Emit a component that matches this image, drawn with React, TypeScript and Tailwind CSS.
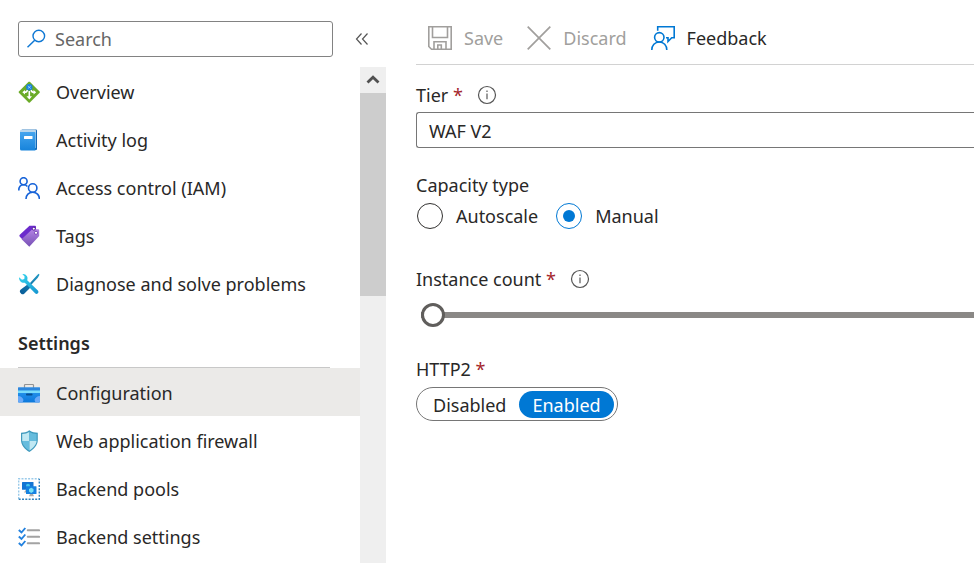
import { useState, type ReactNode } from "react";

function Icon({ children, size = "size-[22px]", box = "0 0 22 22" }: { children: ReactNode; size?: string; box?: string }) {
  return (
    <svg aria-hidden="true" viewBox={box} fill="none" className={`${size} shrink-0`}>
      {children}
    </svg>
  );
}

const GatewayIcon = () => (
  <Icon>
    <path d="M10.600.8h1.200L21.600 10.500a.9.9 0 0 1 0 1.200L11.900 21.400a1 1 0 0 1-1.300 0L.9 11.700a.9.9 0 0 1 0-1.200Z" fill="#6bab28" />
    <path d="M11.300 10v6" stroke="#fff" strokeWidth="1.600" />
    <path d="m8.500 15.300 2.800 3.200 2.700-3.200Z" fill="#fff" />
    <path d="M9.500 9Q9 11.300 6.500 11.300M13 9Q13.500 11.300 16 11.300" stroke="#fff" strokeWidth="1.400" />
    <path d="M4.300 11.300 7 9v4.600ZM18.200 11.300 15.500 9v4.600Z" fill="#fff" />
    <circle cx="11.300" cy="6.300" r="3.200" fill="#1b83dd" />
    <path d="m9.800 5 3 2.600M12.800 5l-3 2.600" stroke="#b5e1ff" strokeWidth=".7" />
  </Icon>
);

const LogIcon = () => (
  <Icon>
    <defs>
      <linearGradient id="book" x1="0" y1="0" x2="0" y2="1">
        <stop stopColor="#45a5ee" />
        <stop offset="1" stopColor="#1683db" />
      </linearGradient>
    </defs>
    <path d="M4 .5h14q1 0 1 1v18.500q0 1-1 1H4Z" fill="#1267b4" />
    <path d="M3.500.5H17q1 0 1 1V19H2V2Q2 .5 3.500.5Z" fill="#b9d6ec" />
    <path d="M2 3h14.500q1 0 1 1v17q0 .6-.8.600H3.500Q2 21.600 2 20Z" fill="url(#book)" />
    <rect x="6" y="7" width="8.500" height="3" rx=".5" fill="#fff" />
  </Icon>
);

const PeopleIcon = () => (
  <Icon>
    <g stroke="#1763d8" strokeWidth="1.600">
      <circle cx="5.600" cy="4.200" r="3.500" />
      <path d="M.8 13.500C.8 10 2.800 7.800 5.600 7.800c1.600 0 2.900.6 3.800 1.700" />
      <circle cx="14.700" cy="11" r="4.200" />
      <path d="M8 22c0-3.900 2.800-6.700 6.700-6.700s6.700 2.800 6.700 6.700" />
    </g>
  </Icon>
);

const TagsIcon = () => (
  <Icon>
    <defs>
      <linearGradient id="tag" x1="0" y1="0" x2="0" y2="1">
        <stop stopColor="#b484e5" />
        <stop offset="1" stopColor="#7650b4" />
      </linearGradient>
    </defs>
    <path d="M11.500.7 17 .8q1 0 1 1v4.500L4.500 14.500l-2.700-2.700q-1-1 0-2Z" fill="#6b2bcc" />
    <path d="m14.500 4 5.800.2q.9 0 .9.900v6L11.300 21.800 3.600 14.300Z" fill="url(#tag)" />
    <circle cx="15.800" cy="3.700" r="1.500" fill="#fff" stroke="#562098" />
    <circle cx="18" cy="7.800" r="1.600" fill="#fff" stroke="#7b4bb8" />
  </Icon>
);

const ToolsIcon = () => (
  <Icon>
    <defs>
      <linearGradient id="driver" x1="1" y1="0" x2="0" y2="1">
        <stop stopColor="#239bc5" />
        <stop offset="1" stopColor="#075996" />
      </linearGradient>
      <linearGradient id="wrench" x1="0" y1="0" x2="1" y2="1">
        <stop stopColor="#38d6ee" />
        <stop offset="1" stopColor="#1695d0" />
      </linearGradient>
    </defs>
    <path d="m20.500.7 1 1-1.700 3-6.500 7-1.500-1.500 6.800-7.500ZM9.500 11.500l3 3-6.300 6.200q-1.500 1.100-3 0l-1.200-1.500q-.6-1.300.5-2.500Z" fill="url(#driver)" />
    <path d="M4.300 1.100Q7.300.6 8.800 3c1 1.500.8 2.700.4 4.200l10.700 10.200q1.300 1.400 0 2.800-1.400 1.300-2.800.1L6.800 9.700C3.800 10.200.8 8.300 1 4.300L4 6.800l2.300-.9.300-2.300Z" fill="url(#wrench)" />
  </Icon>
);

const ToolboxIcon = () => (
  <Icon>
    <defs>
      <linearGradient id="toolbox" x1="0" y1="0" x2="0" y2="1">
        <stop stopColor="#2f9bf0" />
        <stop offset="1" stopColor="#0b78dc" />
      </linearGradient>
    </defs>
    <path d="M6.500 6V3.300q0-.8.800-.8h7.400q.8 0 .8.800V6" stroke="#949494" strokeWidth="1.200" />
    <rect y="5.500" width="22" height="15" rx=".8" fill="url(#toolbox)" />
    <path d="M0 5.500h22v3H0Z" fill="#2e86dc" />
    <path d="M0 8.500h22V11H0Z" fill="#79dcfb" />
    <rect x="8" y="11.500" width="6.500" height="2" rx=".7" fill="#064f92" />
    <path d="M0 14c3 0 5 2 5.500 4l-1 2.500H1L0 19.500ZM22 14c-3 0-5 2-5.500 4l1 2.500H21l1-1Z" fill="#68a9f8" />
  </Icon>
);

const ShieldIcon = () => (
  <Icon>
    <path d="M11.300.2C14 2.300 17 2.600 19.800 2.700V10c0 5.500-4.300 9.200-8.500 12C7 19.200 3 15.500 3 10V2.700C6 2.600 8.800 2.300 11.300.2Z" fill="#3f9abd" />
    <path d="M11.300 2v9H4.200V4C7 3.900 9.300 3.300 11.300 2ZM11.300 11h7.300c-.4 4.200-4 7.500-7.300 9.600Z" fill="#c0e8f3" />
    <path d="M11.300 2c2.200 1.300 4.700 1.900 7.300 2v7h-7.300ZM4.200 11h7.100v9.600C8 18.400 4.500 15.200 4.200 11Z" fill="#66bcdd" />
  </Icon>
);

const PoolsIcon = () => (
  <Icon>
    <path d="M.7 21V.7H21" stroke="#9bcbea" strokeWidth="1.400" strokeDasharray="2 1.300" />
    <path d="M.7 21.300h20.600V.7" stroke="#3282bc" strokeWidth="1.400" strokeDasharray="2 1.300" />
    <rect x="4" y="4" width="11.500" height="7.800" rx=".5" fill="#1375d3" />
    <path d="M8 11.500h3v3H6Z" fill="#ababab" />
    <circle cx="10" cy="7.700" r="2" fill="#45c5ed" />
    <rect x="8" y="8.200" width="10.500" height="7.800" rx=".5" fill="#1682e1" />
    <path d="m13.200 9.700 2.300 1.300v2.600l-2.300 1.300-2.200-1.300V11Z" fill="#75e1f7" />
    <path d="M12 16h3l1 2.300h-5Z" fill="#ababab" />
  </Icon>
);

const ChecklistIcon = () => (
  <Icon>
    <path d="M9.700 4.300h11.500M9.700 10.800h11.500M9.700 17.300h11.500" stroke="#a3a3a3" strokeWidth="1.900" strokeLinecap="round" />
    <path d="m.8 4 2.700 2.500L7.300 2M.8 10.500 3.500 13l3.800-4.500M.8 17l2.700 2.500L7.300 15" stroke="#2382df" strokeWidth="1.900" />
  </Icon>
);

const InfoIcon = () => (
  <Icon size="size-5" box="0 0 20 20">
    <circle cx="10" cy="10" r="8.500" stroke="#555" strokeWidth="1.200" />
    <path d="M10 8.500v5.800M10 5.500v1.600" stroke="#666" strokeWidth="1.300" />
  </Icon>
);

const general = [
  { label: "Overview", icon: <GatewayIcon /> },
  { label: "Activity log", icon: <LogIcon /> },
  { label: "Access control (IAM)", icon: <PeopleIcon /> },
  { label: "Tags", icon: <TagsIcon /> },
  { label: "Diagnose and solve problems", icon: <ToolsIcon /> },
];

const settings = [
  { label: "Configuration", icon: <ToolboxIcon />, current: true },
  { label: "Web application firewall", icon: <ShieldIcon /> },
  { label: "Backend pools", icon: <PoolsIcon /> },
  { label: "Backend settings", icon: <ChecklistIcon /> },
];

function NavItem({ label, icon, current = false }: { label: string; icon: ReactNode; current?: boolean }) {
  return (
    <li>
      <a
        href="#"
        aria-current={current ? "page" : undefined}
        className={`flex h-12 items-center gap-4 pt-0.5 pl-[18px] whitespace-nowrap ${current ? "bg-[#ebeae8]" : ""}`}
      >
        {icon}
        {label}
      </a>
    </li>
  );
}

function Sidebar() {
  return (
    <aside className="flex w-[386px] shrink-0 flex-col">
      <div className="flex items-center gap-5 pt-[21px] pb-2.5 pl-[18px]">
        <label className="flex h-9 w-[315px] items-center gap-2 rounded-[3px] border border-[#828282] px-2">
          <Icon size="size-5" box="0 0 20 20">
            <circle cx="11.800" cy="7" r="5.800" stroke="#0f78d4" strokeWidth="1.400" />
            <path d="M7.700 11.200.5 18.300" stroke="#0f78d4" strokeWidth="1.500" />
          </Icon>
          <input type="search" aria-label="Search" placeholder="Search" className="min-w-0 flex-1 outline-none placeholder:text-[#666]" />
        </label>
        <button type="button" aria-label="Collapse menu">
          <Icon size="size-[18px]" box="0 0 18 18">
            <path d="M8.500 3.500 3.500 9l5 5.500M14.500 3.500 9.500 9l5 5.500" stroke="#555" strokeWidth="1.200" />
          </Icon>
        </button>
      </div>
      <div className="flex flex-1">
        <nav className="min-w-0 flex-1">
          <ul>
            {general.map((item) => (
              <NavItem key={item.label} {...item} />
            ))}
          </ul>
          <h2 className="mr-[30px] ml-[18px] flex h-[61px] items-end border-b border-[#c8c8c8] pb-3 font-semibold">
            Settings
          </h2>
          <ul>
            {settings.map((item) => (
              <NavItem key={item.label} {...item} />
            ))}
          </ul>
        </nav>
        <div className="w-[26px] bg-[#efefef]">
          <button type="button" aria-label="Scroll up" className="flex h-[26px] w-full items-center justify-center">
            <Icon size="size-4" box="0 0 16 16">
              <path d="m2.500 10.500 5.500-5.300 5.500 5.300" stroke="#505050" strokeWidth="2.800" />
            </Icon>
          </button>
          <div className="h-[203px] bg-[#cdcdcd]" />
        </div>
      </div>
    </aside>
  );
}

const Required = () => <span className="text-[#a4262c]">*</span>;

function InfoButton({ about }: { about: string }) {
  return (
    <button type="button" aria-label={`About ${about}`} className="ml-3.5">
      <InfoIcon />
    </button>
  );
}

function Toolbar() {
  return (
    <div className="flex h-[65px] items-center border-b border-[#d2d2d2] pt-3 pl-3 whitespace-nowrap">
      <button type="button" disabled className="flex items-center gap-3 text-[#a19f9d]">
        <Icon size="size-6" box="0 0 24 24">
          <path d="M.8.8h22.400v22.400H3.500L.8 20.500ZM4.500 1v10.500h15V1M6 23v-7.200h12V23M9.800 23v-4h3.500v4" stroke="#a19f9d" strokeWidth="1.600" />
        </Icon>
        Save
      </button>
      <button type="button" disabled className="ml-6 flex items-center gap-3 text-[#a19f9d]">
        <Icon size="size-6" box="0 0 24 24">
          <path d="m.7.7 22.600 22.600M23.300.7.7 23.300" stroke="#a19f9d" strokeWidth="1.700" />
        </Icon>
        Discard
      </button>
      <button type="button" className="ml-6 flex items-center gap-3">
        <Icon size="size-6" box="0 0 24 24">
          <g stroke="#0078d4" strokeWidth="1.600">
            <path d="M6.700 4.800V.8h16.500v11h-2.500l-3.700 3.700v-3.700h-2" />
            <circle cx="8.300" cy="11.300" r="4.700" />
            <path d="M.8 24c0-4.500 3-8 7.500-8s7.500 3.500 7.500 8" />
          </g>
        </Icon>
        Feedback
      </button>
    </div>
  );
}

function CapacityOption({ label, checked, onSelect }: { label: string; checked: boolean; onSelect: () => void }) {
  return (
    <label className="flex items-center gap-[13px]">
      <input
        type="radio"
        name="capacity"
        checked={checked}
        onChange={onSelect}
        className="grid size-[26px] appearance-none place-items-center rounded-full border border-[#323130] checked:border-[#0078d4] checked:before:size-3 checked:before:rounded-full checked:before:bg-[#0078d4]"
      />
      {label}
    </label>
  );
}

function ConfigurationForm() {
  const [capacity, setCapacity] = useState("Manual");
  const [http2, setHttp2] = useState("Enabled");
  const [count, setCount] = useState(1);

  return (
    <form className="whitespace-nowrap">
      <div className="flex h-[47px] items-center pt-3">
        <label htmlFor="tier">
          Tier <Required />
        </label>
        <InfoButton about="tier" />
      </div>
      <select id="tier" className="block h-9 w-full appearance-none rounded-l-[3px] border border-r-0 border-[#767676] px-3 pt-0.5">
        <option>WAF V2</option>
        <option>Standard V2</option>
      </select>

      <fieldset className="mt-[23px]">
        <legend className="leading-7">Capacity type</legend>
        <div className="flex gap-[18px] pt-1 pl-px">
          {["Autoscale", "Manual"].map((name) => (
            <CapacityOption key={name} label={name} checked={capacity === name} onSelect={() => setCapacity(name)} />
          ))}
        </div>
      </fieldset>

      <div className="flex h-[74px] items-end pb-3">
        <div className="flex items-center">
          <label htmlFor="count">
            Instance count <Required />
          </label>
          <InfoButton about="instance count" />
        </div>
      </div>
      <input
        id="count"
        type="range"
        min={1}
        max={125}
        value={count}
        onChange={(e) => setCount(Number(e.target.value))}
        className="block h-6 w-full appearance-none bg-transparent pl-[5px] [&::-webkit-slider-runnable-track]:h-1.5 [&::-webkit-slider-runnable-track]:bg-[#8a8886] [&::-webkit-slider-thumb]:-mt-[9px] [&::-webkit-slider-thumb]:size-6 [&::-webkit-slider-thumb]:appearance-none [&::-webkit-slider-thumb]:rounded-full [&::-webkit-slider-thumb]:border-3 [&::-webkit-slider-thumb]:border-[#605e5c] [&::-webkit-slider-thumb]:bg-white"
      />

      <div id="http2" className="mt-[30px] mb-1.5">
        HTTP2 <Required />
      </div>
      <div role="group" aria-labelledby="http2" className="inline-flex h-[34px] items-center rounded-full border border-[#767676] px-[3px]">
        {["Disabled", "Enabled"].map((name) => (
          <button
            key={name}
            type="button"
            aria-pressed={http2 === name}
            onClick={() => setHttp2(name)}
            className={`flex h-[27px] items-center rounded-full px-[13px] pt-px ${http2 === name ? "bg-[#0078d4] text-white" : ""}`}
          >
            {name}
          </button>
        ))}
      </div>
    </form>
  );
}

export default function App() {
  return (
    <div className="flex min-h-screen bg-white font-['Noto_Sans','Open_Sans',sans-serif] text-lg leading-6 text-[#292827]">
      <Sidebar />
      <main className="min-w-0 flex-1 pl-[30px]">
        <Toolbar />
        <ConfigurationForm />
      </main>
    </div>
  );
}
